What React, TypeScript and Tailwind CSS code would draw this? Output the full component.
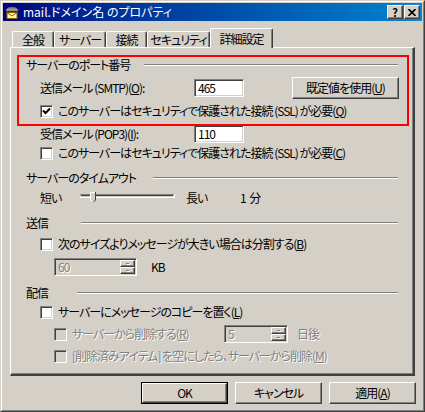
import type { ReactNode } from "react";

const raised =
  "border border-t-white border-l-white border-r-[#404040] border-b-[#404040] shadow-[inset_-1px_-1px_0_#808080,inset_1px_1px_0_#d4d0c8]";
const sunken =
  "border border-t-[#808080] border-l-[#808080] border-r-white border-b-white shadow-[inset_1px_1px_0_#404040,inset_-1px_-1px_0_#d4d0c8]";
const disabledText = "text-[#808080] [text-shadow:1px_1px_0_#ffffff]";

function Checkbox({ checked = false, disabled = false }: { checked?: boolean; disabled?: boolean }) {
  return (
    <div
      className={`flex h-[13px] w-[13px] shrink-0 items-center justify-center ${sunken} ${
        disabled ? "bg-[#d4d0c8]" : "bg-white"
      }`}
    >
      {checked && (
        <svg width="9" height="9" viewBox="0 0 9 9">
          <path d="M1 3.5 L3.5 6 L8 1.5" fill="none" stroke="#000" strokeWidth="2" />
        </svg>
      )}
    </div>
  );
}

function CheckRow({
  children,
  className,
  checked,
  disabled,
}: {
  children: ReactNode;
  className: string;
  checked?: boolean;
  disabled?: boolean;
}) {
  return (
    <div className={`flex h-[16px] items-center ${className}`}>
      <Checkbox checked={checked} disabled={disabled} />
      <span className={`ml-[5px] whitespace-nowrap ${disabled ? disabledText : ""}`}>{children}</span>
    </div>
  );
}

function GroupHeader({ label, labelClass, className }: { label: string; labelClass: string; className: string }) {
  return (
    <div className={`flex h-[16px] items-center pl-[15px] ${className}`}>
      <span className={`shrink-0 whitespace-nowrap ${labelClass}`}>{label}</span>
      <div className="mr-[15px] h-[2px] flex-1 border-t border-b border-t-[#808080] border-b-white" />
    </div>
  );
}

function TextBox({ value }: { value: string }) {
  return (
    <div className={`flex h-[18px] w-[50px] items-center bg-white pl-[3px] ${sunken}`}>{value}</div>
  );
}

function SpinBox({ value, widthClass }: { value: string; widthClass: string }) {
  return (
    <div className={`flex h-[18px] bg-[#d4d0c8] p-[1px] ${widthClass} ${sunken}`}>
      <span className={`flex-1 pl-[2px] leading-[14px] ${disabledText}`}>{value}</span>
      <div className="flex w-[15px] flex-col">
        {[0, 1].map((i) => (
          <div key={i} className={`flex h-[7px] items-center justify-center bg-[#d4d0c8] ${raised}`}>
            <div className="h-[1px] w-[3px] bg-[#808080] shadow-[1px_1px_0_#fff]" />
          </div>
        ))}
      </div>
    </div>
  );
}

function DialogButton({ children, isDefault = false }: { children: ReactNode; isDefault?: boolean }) {
  return (
    <div className={`h-[22px] w-[87px] ${isDefault ? "border border-black" : ""}`}>
      <div className={`flex h-full w-full items-center justify-center bg-[#d4d0c8] ${raised}`}>{children}</div>
    </div>
  );
}

function Tab({ label, widthClass, selected = false }: { label: string; widthClass: string; selected?: boolean }) {
  return (
    <div
      className={`flex items-start justify-center whitespace-nowrap rounded-t-[2px] border-t border-l border-r border-t-white border-l-white border-r-[#404040] bg-[#d4d0c8] shadow-[inset_-1px_0_0_#808080] ${widthClass} ${
        selected ? "relative z-10 h-[20px] pt-[3px]" : "mb-[1px] h-[16px] pt-[1px]"
      }`}
    >
      {label}
    </div>
  );
}

function MailIcon() {
  return (
    <svg width="16" height="16" viewBox="0 0 16 16">
      <path d="M2 7 C2 2 14 2 14 7 Z" fill="#c0c0c0" stroke="#606060" strokeWidth="1" />
      <path d="M4 4.5 H12 M3.5 6 H12.5" stroke="#808080" strokeWidth="1" />
      <rect x="3" y="8.5" width="10" height="6" fill="#fff8a0" stroke="#806000" strokeWidth="1" />
      <path d="M3 8.5 L8 12 L13 8.5" fill="none" stroke="#806000" strokeWidth="1" />
    </svg>
  );
}

function Slider() {
  return (
    <svg width="100" height="16" viewBox="0 0 100 16" className="block">
      <rect x="0" y="4" width="95" height="4" fill="#d4d0c8" />
      <path d="M0 4.5 H94" stroke="#808080" />
      <path d="M1 5.5 H93" stroke="#404040" />
      <path d="M0 7.5 H95" stroke="#ffffff" />
      <path d="M94.5 4 V8" stroke="#ffffff" />
      <path d="M10 2 H16 V10 L13 13 L10 10 Z" fill="#d4d0c8" />
      <path d="M10.5 10 V2.5 H15.5" fill="none" stroke="#ffffff" />
      <path d="M15.5 2 V10 L13 12.5" fill="none" stroke="#404040" />
      <path d="M10.5 10 L13 12.5" fill="none" stroke="#ffffff" />
    </svg>
  );
}

export default function App() {
  return (
    <div className="h-[412px] w-[425px] overflow-hidden bg-white font-['Noto_Sans_CJK_JP',sans-serif] text-[12px] leading-[14px] tracking-[-1px] text-black [font-feature-settings:'palt']">
      <div className="h-full w-full border border-t-[#d4d0c8] border-l-[#d4d0c8] border-r-[#404040] border-b-[#404040] bg-[#d4d0c8]">
        <div className="h-full w-full border border-t-white border-l-white border-r-[#808080] border-b-[#808080] p-[1px]">
          {/* title bar */}
          <div className="flex h-[18px] items-center bg-gradient-to-r from-[#000080] to-[#1084d0] pr-[2px] pl-[1px] tracking-normal">
            <MailIcon />
            <span className="ml-[3px] flex-1 whitespace-nowrap text-white">mail.ドメイン名 のプロパティ</span>
            <div className={`flex h-[14px] w-[16px] items-center justify-center bg-[#d4d0c8] text-[11px] font-bold ${raised}`}>
              ?
            </div>
            <div className={`ml-[1px] flex h-[14px] w-[16px] items-center justify-center bg-[#d4d0c8] ${raised}`}>
              <svg width="8" height="7" viewBox="0 0 8 7">
                <path d="M0.5 0 L7.5 7 M7.5 0 L0.5 7" stroke="#000" strokeWidth="1.6" />
              </svg>
            </div>
          </div>

          {/* tabs */}
          <div className="mt-[7px] flex h-[20px] items-end pl-[9px]">
            <Tab label="全般" widthClass="w-[42px]" />
            <Tab label="サーバー" widthClass="w-[52px]" />
            <Tab label="接続" widthClass="w-[41px]" />
            <Tab label="セキュリティ" widthClass="w-[63px]" />
            <Tab label="詳細設定" widthClass="w-[63px]" selected />
          </div>

          {/* panel */}
          <div className="relative ml-[7px] -mt-[1px] h-[329px] w-[405px] border-t border-l border-r-2 border-b-2 border-t-white border-l-white border-r-[#404040] border-b-[#404040] shadow-[inset_-1px_-1px_0_#808080]">
            <GroupHeader label="サーバーのポート番号" labelClass="w-[118px]" className="mt-[9px]" />

            <div className="mt-[4px] flex h-[22px] items-center pl-[29px]">
              <span className="w-[154px] whitespace-nowrap">
                送信メール (SMTP)(<u>O</u>):
              </span>
              <TextBox value="465" />
              <div className={`ml-[48px] flex h-[22px] w-[107px] items-center justify-center ${raised}`}>
                既定値を使用(<u>U</u>)
              </div>
            </div>

            <CheckRow checked className="mt-[4px] pl-[29px]">
              このサーバーはセキュリティで保護された接続 (SSL) が必要(<u>Q</u>)
            </CheckRow>

            <div className="mt-[6px] flex h-[18px] items-center pl-[29px]">
              <span className="w-[154px] whitespace-nowrap">
                受信メール (POP3)(<u>I</u>):
              </span>
              <TextBox value="110" />
            </div>

            <CheckRow className="mt-[2px] pl-[29px]">
              このサーバーはセキュリティで保護された接続 (SSL) が必要(<u>C</u>)
            </CheckRow>

            <GroupHeader label="サーバーのタイムアウト" labelClass="w-[127px]" className="mt-[9px]" />

            <div className="mt-[4px] flex h-[16px] items-center pl-[29px]">
              <span className="w-[40px]">短い</span>
              <div className="w-[106px]">
                <Slider />
              </div>
              <span className="w-[54px]">長い</span>
              <span className="tracking-normal">1 分</span>
            </div>

            <GroupHeader label="送信" labelClass="w-[55px]" className="mt-[9px]" />

            <CheckRow className="mt-[5px] pl-[29px]">
              次のサイズよりメッセージが大きい場合は分割する(<u>B</u>)
            </CheckRow>

            <div className="mt-[6px] flex h-[18px] items-center pl-[43px]">
              <SpinBox value="60" widthClass="w-[83px]" />
              <span className="ml-[14px]">KB</span>
            </div>

            <GroupHeader label="配信" labelClass="w-[51px]" className="mt-[9px]" />

            <CheckRow className="mt-[3px] pl-[29px]">
              サーバーにメッセージのコピーを置く(<u>L</u>)
            </CheckRow>

            <div className="mt-[5px] flex h-[18px] items-center pl-[43px]">
              <div className="flex w-[170px] items-center">
                <Checkbox disabled />
                <span className={`ml-[5px] whitespace-nowrap ${disabledText}`}>
                  サーバーから削除する(<u>R</u>)
                </span>
              </div>
              <SpinBox value="5" widthClass="w-[64px]" />
              <span className={`ml-[9px] ${disabledText}`}>日後</span>
            </div>

            <CheckRow disabled className="mt-[5px] pl-[43px]">
              [削除済みアイテム] を空にしたら、サーバーから削除(<u>M</u>)
            </CheckRow>

            {/* highlight annotation */}
            <div className="pointer-events-none absolute top-[7px] left-[6px] h-[71px] w-[392px] border-2 border-[#ff0000]" />
          </div>

          {/* bottom buttons */}
          <div className="mt-[6px] mr-[6px] flex justify-end gap-[7px]">
            <DialogButton isDefault>OK</DialogButton>
            <DialogButton>キャンセル</DialogButton>
            <DialogButton>
              適用(<u>A</u>)
            </DialogButton>
          </div>
        </div>
      </div>
    </div>
  );
}
